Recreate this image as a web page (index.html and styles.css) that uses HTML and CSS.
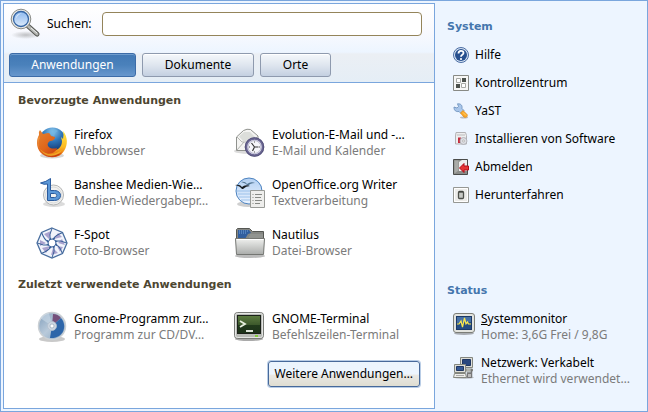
FILE: index.html
```html
<!DOCTYPE html>
<html lang="de">
<head>
<meta charset="utf-8">
<title>Anwendungen</title>
<link rel="stylesheet" href="styles.css">
</head>
<body>
<div class="menu">
  <main class="panel">
    <header class="header">
      <form class="search">
        <svg class="search-icon" viewBox="0 0 32 32" aria-hidden="true">
          <defs>
            <linearGradient id="lens" x2="0" y2="1"><stop stop-color="#8cb8ef"/><stop offset="1" stop-color="#dcebfc"/></linearGradient>
            <radialGradient id="shade"><stop stop-color="#888" stop-opacity=".5"/><stop offset="1" stop-color="#888" stop-opacity="0"/></radialGradient>
          </defs>
          <ellipse cx="16" cy="27" rx="15" ry="4" fill="url(#shade)"/>
          <path d="M18 18l9 8" stroke="#555753" stroke-width="5" stroke-linecap="round"/>
          <path d="M18 18l9 8" stroke="#b4b6b2" stroke-width="3" stroke-linecap="round"/>
          <path d="M21 20l6 5" stroke="#eee" stroke-width="1"/>
          <circle cx="11" cy="11" r="9.800" fill="#e8e9e7" stroke="#8a8c88"/>
          <circle cx="11" cy="11" r="7.500" fill="url(#lens)" stroke="#3465a4" stroke-width="1.300"/>
          <path d="M5.500 11q1-6 7-6-4 1-7 6z" fill="#fff" opacity=".6"/>
        </svg>
        <label for="query">Suchen:</label>
        <input class="query" id="query" type="text">
      </form>
      <nav class="tabs">
        <button class="tab tab-wide tab-active" type="button">Anwendungen</button>
        <button class="tab tab-medium" type="button">Dokumente</button>
        <button class="tab" type="button">Orte</button>
      </nav>
    </header>

    <section>
      <h2 class="title">Bevorzugte Anwendungen</h2>
      <div class="apps">
        <a class="app" href="#">
          <svg class="app-icon" viewBox="0 0 32 32" aria-hidden="true">
            <defs>
              <radialGradient id="globe" cx=".5" cy=".15" r=".8"><stop stop-color="#8ac7ee"/><stop offset=".45" stop-color="#2f76b9"/><stop offset="1" stop-color="#102c66"/></radialGradient>
              <linearGradient id="fox" x1="0" y1="0" x2="1" y2="1"><stop stop-color="#e58431"/><stop offset=".5" stop-color="#e0651a"/><stop offset="1" stop-color="#b92b0c"/></linearGradient>
              <linearGradient id="tail" x2="0" y2="1"><stop stop-color="#ffe84a"/><stop offset=".6" stop-color="#fdbb20"/><stop offset="1" stop-color="#e35b10"/></linearGradient>
            </defs>
            <ellipse cx="16" cy="28.500" rx="12" ry="3" fill="#888" opacity=".35"/>
            <circle cx="16.500" cy="14" r="13.500" fill="url(#globe)"/>
            <path d="M14 3q5-2 8 1l-3 2-1 4-4-3z" fill="#71b5e2" opacity=".7"/>
            <path d="M27 4c5 6 5 14 1 20-3 5-8 7-14 6l-6-5 9-1c5-1 9-4 9-10l-1-4 2 2q1-4 0-8z" fill="url(#tail)"/>
            <path d="M4 3l3 4 5-1c2 0 2 1 3 3l4 1c0 3-3 4-5 4-2 1-3 3-2 5 2 3 6 3 9 2-1 4-5 6-9 5 6 3 11 2 14-1-4 5-8 5-13 5C7 29 1 24 1 16c0-4 1-6 2-8q-1-3 1-5z" fill="url(#fox)"/>
            <path d="M3 9l1 2c-2 4-2 7 0 11-3-4-3-9-1-13z" fill="#f9a645" opacity=".5"/>
            <path d="M4 22c6 7 15 6 22 1-5 7-16 9-22-1z" fill="#f7c32d" opacity=".65"/>
          </svg>
          <span class="label"><span>Firefox</span><span class="note">Webbrowser</span></span>
        </a>
        <a class="app" href="#">
          <svg class="app-icon" viewBox="0 0 32 32" aria-hidden="true">
            <ellipse cx="15" cy="24" rx="15" ry="3" fill="#888" opacity=".3"/>
            <path d="M2.500 10L9.500 3.500Q13 1.500 16.500 2.500L24 9v14.500H2.500z" fill="#f4f4f2" stroke="#90928e"/>
            <path d="M3 10l5 5h10l6-6M3 23l7-8m8 0l6 5" fill="none" stroke="#b4b6b2"/>
            <path d="M5 9.500L10 5h6l5 5-4 4H9z" fill="#dcdeda"/>
            <circle cx="20.500" cy="20" r="8.500" fill="#eeeef5" stroke="#6b6793" stroke-width="2.500"/>
            <circle cx="20.500" cy="20" r="9.300" fill="none" stroke="#4b4870" stroke-width=".7"/>
            <circle cx="20.500" cy="20" r="6.500" fill="#f5f5fa" stroke="#aaa8c4" stroke-width=".8"/>
            <path d="M20.500 20l-3-4m3 4l4 0m-4 0l-2 4" fill="none" stroke="#333" stroke-width="1.200"/>
            <path d="M20.500 14.500v1m0 9v1m-5.500-5.500h1m9 0h1" stroke="#555"/>
          </svg>
          <span class="label"><span>Evolution-E-Mail und -…</span><span class="note">E-Mail und Kalender</span></span>
        </a>
        <a class="app" href="#">
          <svg class="app-icon" viewBox="0 0 32 32" aria-hidden="true">
            <ellipse cx="18" cy="27" rx="11" ry="3" fill="#888" opacity=".3"/>
            <circle cx="17.500" cy="18" r="10" fill="#f1f1f0" stroke="#b4b5b4"/>
            <circle cx="17.500" cy="18" r="8" fill="none" stroke="#d9dad9"/>
            <path d="M4.500 6Q10 5 14.500 1.500V13.500h4c8 0 8 10 0 10h-7V7Q8 8 4.500 6z M14.500 16.500v4h4c3 0 3-4 0-4z" fill="#5c98d8" fill-rule="evenodd" stroke="#2a5b9e"/>
          </svg>
          <span class="label"><span>Banshee Medien-Wie…</span><span class="note">Medien-Wiedergabepr…</span></span>
        </a>
        <a class="app" href="#">
          <svg class="app-icon" viewBox="0 0 32 32" aria-hidden="true">
            <defs><linearGradient id="sky" x2="0" y2="1"><stop stop-color="#b3d0f2"/><stop offset="1" stop-color="#ebf4ff"/></linearGradient></defs>
            <ellipse cx="14" cy="27" rx="11" ry="3" fill="#888" opacity=".4"/>
            <circle cx="15" cy="14" r="13" fill="url(#sky)" stroke="#4d83c0"/>
            <path d="M5 20h20M4 17h23M3 14h24M7 23h17" stroke="#9dc2ea" stroke-width="1"/>
            <path d="M7 5q4-1 6 2 4-3 8-1-5 0-7 3-2-3-7-4z" fill="#4e718f"/>
            <path d="M1 8q5-1 7 2 3-3 8-1-4 0-7 3H8Q6 9 1 8z" fill="#171d22"/>
            <path d="M16.500 13.500h14v17h-14z" fill="#eeeeec" stroke="#999b97"/>
            <path d="M21 17.500h7m-7 3h6m-6 3h7m-7 3h5M18.500 17.500h1m-1 3h1m-1 3h1m-1 3h1" stroke="#878985"/>
          </svg>
          <span class="label"><span>OpenOffice.org Writer</span><span class="note">Textverarbeitung</span></span>
        </a>
        <a class="app" href="#">
          <svg class="app-icon" viewBox="0 0 32 32" aria-hidden="true">
            <path d="M16 1l10.500 4.500L31 16l-4.500 10.500L16 31 5.500 26.500 1 16 5.500 5.500z" fill="#f1f4fb" stroke="#496e9f" stroke-width="1.300"/>
            <path d="M8 7l7-3-2 8zM22 6l4 4-8 2zM26 12l3 6-7-2zM27 20l-3 5-3-6zM22 26l-7 2 2-7zM10 26l-4-5 8-2zM4 19l0-6 6 3z" fill="#aaa2ce"/>
            <g fill="none" stroke="#385f98" stroke-width="1">
              <path id="blade" d="M16 1.500q-3 6-2 11l5-1"/>
              <use href="#blade" transform="rotate(45 16 16)"/><use href="#blade" transform="rotate(90 16 16)"/><use href="#blade" transform="rotate(135 16 16)"/><use href="#blade" transform="rotate(180 16 16)"/><use href="#blade" transform="rotate(225 16 16)"/><use href="#blade" transform="rotate(270 16 16)"/><use href="#blade" transform="rotate(315 16 16)"/>
            </g>
            <circle cx="16" cy="16" r="3" fill="#fff"/>
          </svg>
          <span class="label"><span>F-Spot</span><span class="note">Foto-Browser</span></span>
        </a>
        <a class="app" href="#">
          <svg class="app-icon" viewBox="0 0 32 32" aria-hidden="true">
            <defs><linearGradient id="folder" x2="0" y2="1"><stop stop-color="#f0f1ef"/><stop offset="1" stop-color="#aaacaa"/></linearGradient></defs>
            <ellipse cx="16" cy="29" rx="15" ry="2" fill="#555" opacity=".4"/>
            <path d="M2.500 13V2.500l1-1h12l3 3h11V13z" fill="#858783" stroke="#555753"/>
            <path d="M4 13V3h11l2 3-3 1-3 5z" fill="#315e9e"/>
            <path d="M5 4h9M5 6h8" stroke="#77a5dc" stroke-dasharray="1 1"/>
            <path d="M16 8h13M15 10h14" stroke="#9da09c"/>
            <path d="M1.500 11.500h29l-1 16H2.500z" fill="url(#folder)" stroke="#747672"/>
            <path d="M2.500 12.500h27" stroke="#fff"/>
          </svg>
          <span class="label"><span>Nautilus</span><span class="note">Datei-Browser</span></span>
        </a>
      </div>
    </section>

    <section>
      <h2 class="title">Zuletzt verwendete Anwendungen</h2>
      <div class="apps">
        <a class="app" href="#">
          <svg class="app-icon" viewBox="0 0 32 32" aria-hidden="true">
            <defs><linearGradient id="disc" x2="1" y2="1"><stop stop-color="#809dbb"/><stop offset=".5" stop-color="#b9cada"/><stop offset="1" stop-color="#7f9fbe"/></linearGradient></defs>
            <ellipse cx="16" cy="28" rx="13" ry="3" fill="#777" opacity=".4"/>
            <circle cx="16" cy="15" r="13.500" fill="url(#disc)" stroke="#cbd0d4" stroke-width="1.500"/>
            <path d="M16 15l1-12q5 0 8 4z" fill="#75507b"/>
            <path d="M16 15l9-8c7 8 2 21-11 20z" fill="#2e66a9"/>
            <path d="M16 15L4 7q4-5 9-5z" fill="#cbdae7" opacity=".6"/>
            <circle cx="16" cy="15" r="4.500" fill="#ccd6e1" stroke="#b3bfcd" stroke-width=".8"/>
            <circle cx="16" cy="15" r="2" fill="#fff" stroke="#8c9daf" stroke-width=".6"/>
          </svg>
          <span class="label"><span>Gnome-Programm zur…</span><span class="note">Programm zur CD/DV…</span></span>
        </a>
        <a class="app" href="#">
          <svg class="app-icon" viewBox="0 0 32 32" aria-hidden="true">
            <defs><linearGradient id="screen" x2="0" y2="1"><stop stop-color="#5d7c40"/><stop offset=".5" stop-color="#3e5a2d"/><stop offset=".55" stop-color="#203a1b"/><stop offset="1" stop-color="#1c3019"/></linearGradient></defs>
            <ellipse cx="15" cy="28" rx="14" ry="2" fill="#555" opacity=".5"/>
            <rect x=".5" y="1.500" width="29" height="26" rx="3" fill="#b9bbb7" stroke="#797b77"/>
            <rect x="1.500" y="2.500" width="27" height="24" rx="2" fill="none" stroke="#e5e6e4"/>
            <rect x="3.500" y="4.500" width="23" height="18" fill="url(#screen)" stroke="#1b2119"/>
            <path d="M6 10l5 3-5 3" fill="none" stroke="#e7f0df" stroke-width="1.800"/>
            <path d="M12 20h7" stroke="#f2f6ef" stroke-width="1.800"/>
            <path d="M21 25h3" stroke="#73d216" stroke-width="1.500"/>
          </svg>
          <span class="label"><span>GNOME-Terminal</span><span class="note">Befehlszeilen-Terminal</span></span>
        </a>
      </div>
    </section>

    <button class="more" type="button">Weitere Anwendungen…</button>
  </main>

  <aside class="side">
    <section>
      <h2 class="side-title">System</h2>
      <ul class="links">
        <li><a class="link" href="#">
          <svg class="link-icon" viewBox="0 0 16 16" aria-hidden="true">
            <circle cx="8" cy="8" r="7.500" fill="#d9e5f4" stroke="#4a6da3"/>
            <circle cx="8" cy="8" r="6" fill="#27508f"/>
            <path d="M5.500 6.500C5.500 3 10.500 3 10.500 6 10.500 8 8 7.500 8 9.800" fill="none" stroke="#fff" stroke-width="1.800"/>
            <circle cx="8" cy="12" r="1.100" fill="#fff"/>
          </svg>Hilfe</a></li>
        <li><a class="link" href="#">
          <svg class="link-icon" viewBox="0 0 16 16" aria-hidden="true">
            <path d="M.5.5h15v15H.5z" fill="#f7f7f6" stroke="#888a85"/>
            <path d="M9 3h4v4H9zM3 9h4v4H3z" fill="#4c514c"/>
            <path d="M3.500 3.500h4v4h-4zM8.500 8.500h4v4h-4z" fill="#fff" stroke="#a7a9a5"/>
          </svg>Kontrollzentrum</a></li>
        <li><a class="link" href="#">
          <svg class="link-icon" viewBox="0 0 16 16" aria-hidden="true">
            <ellipse cx="11" cy="14.500" rx="4" ry="1" fill="#bbb"/>
            <path d="M1 4l3 1 1.500-1.500L4.500.8C8 .5 9.500 2.500 9 5.500l2 2-3 3-2-2C3 9 .8 7.500 1 4z" fill="#a9c6ea" stroke="#668bb9" stroke-width=".8"/>
            <path d="M10 7.500l4 4c1 2-1 3.500-3 2.500L7.500 10z" fill="#fca928" stroke="#e38a12" stroke-width=".8"/>
            <path d="M10 9.500l3 3" stroke="#ffd16c"/>
          </svg>YaST</a></li>
        <li><a class="link" href="#">
          <svg class="link-icon" viewBox="0 0 16 16" aria-hidden="true">
            <path d="M3 1.500h9.500l1 3v8.500h-11v-8z" fill="#eeeeef" stroke="#b3b2b5"/>
            <path d="M4 4h8" stroke="#bbb"/>
            <path d="M5 6.500h3V12H5z" fill="#c52b3d"/>
            <circle cx="10.500" cy="10" r="3.500" fill="#dddee3" stroke="#aaaab0" stroke-width=".8"/>
            <circle cx="10.500" cy="10" r="1" fill="#fff" stroke="#999" stroke-width=".6"/>
          </svg>Installieren von Software</a></li>
        <li><a class="link" href="#">
          <svg class="link-icon" viewBox="0 0 16 16" aria-hidden="true">
            <path d="M.5.500h14v15H.500z" fill="#8a8c89" stroke="#4a4c4a"/>
            <path d="M1.500 1.500h4v10l-4 3z" fill="#a9aba8"/>
            <path d="M6 12V3l3-2h5v11z" fill="#eee"/>
            <path d="M6.500 9l4.500-4.500v2.500h4.500v4H11v2.500z" fill="#e43434" stroke="#b30c18"/>
          </svg>Abmelden</a></li>
        <li><a class="link" href="#">
          <svg class="link-icon" viewBox="0 0 16 16" aria-hidden="true">
            <path d="M.5.5h15v15H.5z" fill="#ececea" stroke="#969894"/>
            <path d="M1.500 1.500h13v13h-13z" fill="none" stroke="#fff"/>
            <rect x="5.500" y="4.500" width="5" height="7" rx="1" fill="#c7c9c5" stroke="#4d504b" stroke-width="1.300"/>
            <path d="M6 5h4" stroke="#343733" stroke-width="1"/>
          </svg>Herunterfahren</a></li>
      </ul>
    </section>

    <section>
      <h2 class="side-title">Status</h2>
      <ul class="states">
        <li><a class="state" href="#">
          <svg class="state-icon" viewBox="0 0 22 22" aria-hidden="true">
            <ellipse cx="11" cy="20.500" rx="10" ry="1.500" fill="#555" opacity=".45"/>
            <rect x=".5" y=".5" width="21" height="19" rx="2.500" fill="#e3e4df" stroke="#7c7e78"/>
            <rect x="3.500" y="3.500" width="15" height="13" fill="#244c83" stroke="#1b3966"/>
            <path d="M4 10V4h14v5z" fill="#4670a5"/>
            <path d="M4 11h2l2-3 1.500 6L11.500 5l1.500 6 1.500-2 1 2H18" fill="none" stroke="#fce94f" stroke-width="1.200"/>
          </svg>
          <span class="label"><span><u>S</u>ystemmonitor</span><span class="note">Home: 3,6G Frei / 9,8G</span></span>
        </a></li>
        <li><a class="state" href="#">
          <svg class="state-icon" viewBox="0 0 22 22" aria-hidden="true">
            <ellipse cx="11" cy="20.500" rx="10" ry="1.500" fill="#555" opacity=".3"/>
            <path d="M7.500.5h12v10h-12z" fill="#deded8" stroke="#85877f"/>
            <path d="M9.500 2.500h8v6h-8z" fill="#29477e" stroke="#203762"/>
            <path d="M13 12h6.500v2H13z" fill="#deded8" stroke="#85877f"/>
            <path d="M1.500 7.500h11v8h-11z" fill="#deded8" stroke="#85877f"/>
            <path d="M3.500 9.500h7v4h-7z" fill="#345692" stroke="#203762"/>
            <path d="M1.500 16.500h11l1 4H.5z" fill="#eeeeea" stroke="#85877f"/>
            <path d="M3 18.500h8" stroke="#aaa"/>
            <path d="M18.500 12v4h-4v4h4v-4" fill="none" stroke="#777" stroke-width="1.500"/>
            <path d="M14.500 16.500h4v4h-4z" fill="#bbb" stroke="#777"/>
          </svg>
          <span class="label"><span>Netzwerk: Verkabelt</span><span class="note">Ethernet wird verwendet…</span></span>
        </a></li>
      </ul>
    </section>
  </aside>
</div>
</body>
</html>
```
FILE: styles.css
```css
* {
  box-sizing: border-box;
}

body {
  margin: 0;
  color: #000;
  font: 12px/16px "Noto Sans", sans-serif;
}

button,
input {
  font: inherit;
  color: inherit;
}

a {
  color: inherit;
  text-decoration: none;
}

h2 {
  margin: 0;
  font: bold 11px/16px "DejaVu Sans", sans-serif;
}

ul {
  margin: 0;
  padding: 0;
  list-style: none;
}

svg {
  flex: none;
}

.menu {
  display: grid;
  grid-template-columns: 2fr 1fr;
  min-height: 100vh;
  padding: 2px;
  border: 1px solid #7aa6dd;
  background: #edf5ff;
}

.panel {
  display: flex;
  flex-direction: column;
  min-width: 432px;
  border: 1px solid #7aa6dd;
  background: #fff;
}

.header {
  padding: 4px 5px 5px;
  border-bottom: 1px solid #7aa6dd;
  background: linear-gradient(#fff 0, #f8f9fe 28px, #edf5ff 48px, #ebeff4 50px, #e5eef6 100%);
}

.search {
  display: flex;
  align-items: center;
  padding: 0 7px 0 1px;
}

.search-icon {
  width: 32px;
  height: 32px;
  margin-right: 5px;
}

.query {
  flex: 1;
  min-width: 0;
  height: 24px;
  margin-left: 10px;
  padding: 0 5px;
  border: 1px solid #94845a;
  border-radius: 4px;
  background: #fff;
}

.tabs {
  display: flex;
  gap: 6px;
  margin-top: 13px;
}

.tab {
  min-width: 71px;
  height: 24px;
  padding: 0 20px;
  border: 1px solid #8e9aae;
  border-radius: 3px;
  background: linear-gradient(#f5f8fb, #dfe6ef 50%, #c4d0e1);
  box-shadow: inset 0 1px #fff;
}

.tab-wide {
  min-width: 127px;
}

.tab-medium {
  min-width: 112px;
}

.tab-active {
  border-color: #3c6ca8;
  background: linear-gradient(#4279b5, #4a81bb 50%, #6797cd);
  box-shadow: inset 0 1px #6f9dce;
  color: #fff;
}

.title {
  padding: 10px 14px;
  color: #4d4631;
}

.apps {
  display: grid;
  grid-template-columns: 198px 1fr;
  row-gap: 18px;
  padding: 8px 16px 8px 32px;
}

.app,
.state {
  display: flex;
  gap: 6px;
  white-space: nowrap;
}

.app-icon {
  width: 32px;
  height: 32px;
}

.label {
  display: flex;
  flex-direction: column;
}

.note {
  color: #7b7b7b;
}

.more {
  align-self: flex-end;
  height: 26px;
  margin: 10px 14px 20px;
  padding: 0 6px;
  border: 1px solid #47699a;
  border-radius: 3px;
  background: linear-gradient(#ebf4fd 0, #edf5fe 50%, #e9e8e4 55%, #dfddd1);
  box-shadow: 0 0 0 1px #b9cde6;
}

.side {
  display: flex;
  flex-direction: column;
  justify-content: space-between;
  padding: 16px 12px 22px;
}

.side-title {
  color: #4576ad;
}

.links,
.states {
  display: grid;
  gap: 12px;
  padding: 12px 0 0 6px;
}

.link {
  display: flex;
  gap: 6px;
}

.link-icon {
  width: 16px;
  height: 16px;
}

.state-icon {
  width: 22px;
  height: 22px;
  margin-top: 2px;
}
```
